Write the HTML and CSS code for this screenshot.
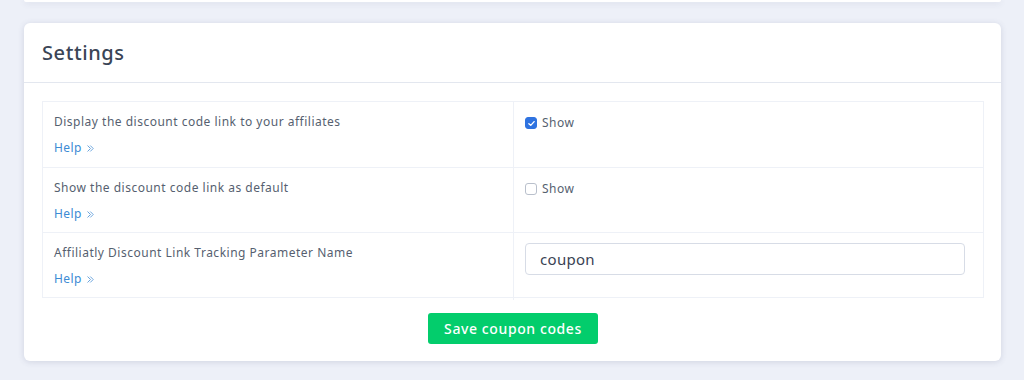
FILE: index.html
```
<!DOCTYPE html>
<html>
<head>
<meta charset="utf-8">
<link rel="stylesheet" href="styles.css">
</head>
<body>
<div class="page">
  <div class="top-card"></div>
  <div class="card">
    <div class="card-header"><h2 class="title">Settings</h2></div>
    <div class="card-body">
      <div class="table">
        <div class="row">
          <div class="cell label-cell">
            <div class="label">Display the discount code link to your affiliates</div>
            <a class="help">Help <svg class="chev" viewBox="0 0 10 10" width="9" height="9"><path d="M2 2 L5 5 L2 8 M5 2 L8 5 L5 8" fill="none" stroke="#5b9bd9" stroke-width="1" stroke-linecap="round" stroke-linejoin="round"/></svg></a>
          </div>
          <div class="cell value-cell">
            <label class="check"><span class="box checked"><svg viewBox="0 0 12 12" width="9" height="9"><path d="M2.5 6.2 L5 8.5 L9.5 3.5" fill="none" stroke="#fff" stroke-width="1.8" stroke-linecap="round" stroke-linejoin="round"/></svg></span>Show</label>
          </div>
        </div>
        <div class="row">
          <div class="cell label-cell">
            <div class="label">Show the discount code link as default</div>
            <a class="help">Help <svg class="chev" viewBox="0 0 10 10" width="9" height="9"><path d="M2 2 L5 5 L2 8 M5 2 L8 5 L5 8" fill="none" stroke="#5b9bd9" stroke-width="1" stroke-linecap="round" stroke-linejoin="round"/></svg></a>
          </div>
          <div class="cell value-cell">
            <label class="check"><span class="box"></span>Show</label>
          </div>
        </div>
        <div class="row">
          <div class="cell label-cell">
            <div class="label">Affiliatly Discount Link Tracking Parameter Name</div>
            <a class="help">Help <svg class="chev" viewBox="0 0 10 10" width="9" height="9"><path d="M2 2 L5 5 L2 8 M5 2 L8 5 L5 8" fill="none" stroke="#5b9bd9" stroke-width="1" stroke-linecap="round" stroke-linejoin="round"/></svg></a>
          </div>
          <div class="cell value-cell input-cell">
            <div class="input">coupon</div>
          </div>
        </div>
      </div>
      <div class="actions"><button class="btn">Save coupon codes</button></div>
    </div>
  </div>
</div>
</body>
</html>
```
FILE: styles.css
```
* { box-sizing: border-box; }
html, body { margin: 0; padding: 0; }
body {
  background: #edf0f8;
  font-family: "Noto Sans", "DejaVu Sans", sans-serif;
  color: #3f4a5c;
  width: 1024px;
  height: 380px;
  overflow: hidden;
}
.page {
  padding: 0 23px 0 24px;
  display: flex;
  flex-direction: column;
  gap: 21px;
}
.top-card {
  height: 2px;
  background: #fff;
  border-radius: 0 0 6px 6px;
  box-shadow: 0 1px 6px rgba(60, 70, 110, 0.18);
}
.card {
  background: #fff;
  border-radius: 6px;
  box-shadow: 0 1px 6px rgba(60, 70, 110, 0.16);
}
.card-header {
  height: 60px;
  border-bottom: 1px solid #e3e7ef;
  padding: 0 18px;
  display: flex;
  align-items: center;
}
.title {
  margin: 0;
  font-size: 20px;
  font-weight: 500;
  color: #3a4556;
  letter-spacing: 0.6px;
}
.card-body {
  padding: 18px 17px 17px 18px;
}
.table {
  border: 1px solid #eef1f7;
}
.row {
  display: grid;
  grid-template-columns: 470px 1fr;
  height: 65px;
  border-top: 1px solid #eef1f7;
}
.row:first-child { border-top: none; }
.cell { padding: 12px 11px; }
.value-cell { border-left: 1px solid #eef1f7; padding-top: 13px; }
.label {
  font-size: 12px;
  color: #565f70;
  letter-spacing: 0.5px;
  line-height: 16px;
}
.help {
  display: inline-flex;
  align-items: center;
  gap: 4px;
  margin-top: 10px;
  font-size: 12px;
  letter-spacing: 0.4px;
  color: #3d8bd4;
  line-height: 16px;
}
.chev { margin-top: 1px; }
.check {
  display: flex;
  align-items: center;
  gap: 5px;
  font-size: 12px;
  letter-spacing: 0.5px;
  color: #565f70;
  line-height: 16px;
}
.box {
  width: 12px;
  height: 12px;
  border-radius: 3px;
  border: 1px solid #b9c0cc;
  background: #fff;
  display: inline-flex;
  align-items: center;
  justify-content: center;
}
.box.checked { background: #2f73e0; border-color: #2f73e0; }
.value-cell.input-cell { padding: 10px 18px 10px 11px; }
.input {
  height: 32px;
  border: 1px solid #d7dce6;
  border-radius: 4px;
  padding: 0 14px;
  display: flex;
  align-items: center;
  font-size: 15px;
  letter-spacing: 0.3px;
  color: #3a4353;
}
.actions {
  display: flex;
  justify-content: center;
  margin-top: 15px;
}
.btn {
  height: 31px;
  width: 170px;
  border: none;
  border-radius: 3px;
  background: #03cd6c;
  color: #fff;
  font-family: inherit;
  font-size: 14px;
  letter-spacing: 0.6px;
  font-weight: 500;
  padding: 0;
}
```
